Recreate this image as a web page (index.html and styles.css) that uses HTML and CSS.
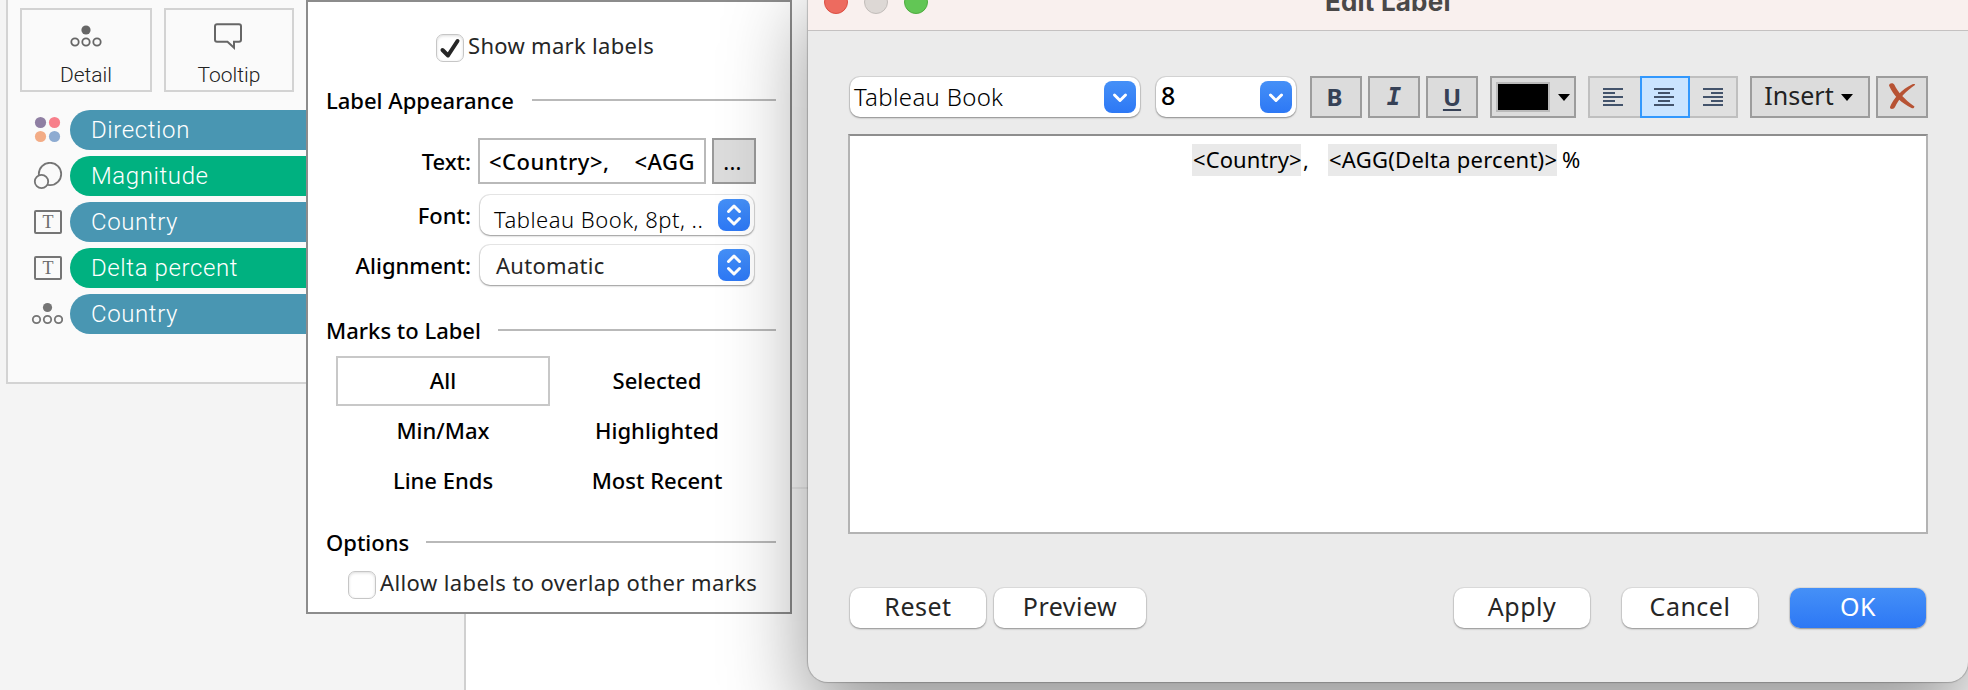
FILE: index.html
```html
<!DOCTYPE html>
<html lang="en">
<head>
<meta charset="utf-8">
<title>Edit Label</title>
<link rel="stylesheet" href="styles.css">
</head>
<body>
<div class="workspace">
  <aside class="side">
    <section class="marks-card">
      <div class="mark-buttons">
        <div class="mark-button detail">
          <svg width="32" height="28" viewBox="0 0 32 28"><circle cx="16" cy="7" r="4.6" fill="#666"/><g fill="none" stroke="#666" stroke-width="1.8"><circle cx="5" cy="19" r="3.7"/><circle cx="16" cy="19" r="3.7"/><circle cx="27" cy="19" r="3.7"/></g></svg>
          <span>Detail</span>
        </div>
        <div class="mark-button tooltip">
          <svg width="32" height="28" viewBox="0 0 32 28"><path d="M4 1.2h22a2 2 0 0 1 2 2v13.600a2 2 0 0 1-2 2h-5v6l-6.500-6H4a2 2 0 0 1-2-2V3.200a2 2 0 0 1 2-2z" fill="none" stroke="#666" stroke-width="2"/></svg>
          <span>Tooltip</span>
        </div>
      </div>
      <ul class="pills">
        <li><svg width="32" height="28" viewBox="0 0 32 28"><circle cx="9.500" cy="6.500" r="5.600" fill="#8f7fa3"/><circle cx="23.500" cy="6.500" r="5.600" fill="#f77f8b"/><circle cx="9.500" cy="20.500" r="5.600" fill="#f3ac86"/><circle cx="23.500" cy="20.500" r="5.600" fill="#8dabd1"/></svg><span class="pill blue">Direction</span></li>
        <li><svg width="32" height="28" viewBox="0 0 32 28"><g fill="#fafafa" stroke="#757575" stroke-width="1.800"><circle cx="19" cy="12" r="11.200"/><circle cx="10.500" cy="19.500" r="6.700"/></g></svg><span class="pill green">Magnitude</span></li>
        <li><svg width="32" height="28" viewBox="0 0 32 28"><rect x="4" y="3" width="26" height="22" rx="1" fill="none" stroke="#757575" stroke-width="2"/><text class="t-glyph" x="17" y="20" text-anchor="middle">T</text></svg><span class="pill blue">Country</span></li>
        <li><svg width="32" height="28" viewBox="0 0 32 28"><rect x="4" y="3" width="26" height="22" rx="1" fill="none" stroke="#757575" stroke-width="2"/><text class="t-glyph" x="17" y="20" text-anchor="middle">T</text></svg><span class="pill green">Delta percent</span></li>
        <li><svg width="32" height="28" viewBox="0 0 32 28"><circle cx="16.500" cy="7.500" r="4.600" fill="#757575"/><g fill="none" stroke="#757575" stroke-width="1.800"><circle cx="5.500" cy="19.500" r="3.700"/><circle cx="16.500" cy="19.500" r="3.700"/><circle cx="27.500" cy="19.500" r="3.700"/></g></svg><span class="pill blue">Country</span></li>
      </ul>
    </section>
  </aside>
  <main class="canvas"></main>
</div>

<section class="popup">
  <label class="check-row show-labels"><span class="check"><svg width="28" height="28" viewBox="0 0 28 28"><path d="M6.500 16l5.500 5.500L21.500 7" fill="none" stroke="#262626" stroke-width="4" stroke-linecap="round" stroke-linejoin="round"/></svg></span><span>Show mark labels</span></label>
  <h2 class="heading appearance"><span>Label Appearance</span></h2>
  <div class="form">
    <span class="form-label">Text:</span>
    <div class="text-row"><div class="text-field"><span>&lt;Country&gt;,&nbsp;&nbsp;&nbsp; &lt;AGG</span></div><div class="more">...</div></div>
    <span class="form-label">Font:</span>
    <div class="select font-select"><span>Tableau Book, 8pt, ..</span><svg class="knob" width="32" height="32" viewBox="0 0 32 32"><path d="M10.500 12.500l5.500-5.500 5.500 5.500M10.500 19.500l5.500 5.500 5.500-5.500"/></svg></div>
    <span class="form-label">Alignment:</span>
    <div class="select"><span>Automatic</span><svg class="knob" width="32" height="32" viewBox="0 0 32 32"><path d="M10.500 12.500l5.500-5.500 5.500 5.500M10.500 19.500l5.500 5.500 5.500-5.500"/></svg></div>
  </div>
  <h2 class="heading marks"><span>Marks to Label</span></h2>
  <div class="choices">
    <div class="choice selected">All</div><div class="choice">Selected</div>
    <div class="choice">Min/Max</div><div class="choice">Highlighted</div>
    <div class="choice">Line Ends</div><div class="choice">Most Recent</div>
  </div>
  <h2 class="heading options"><span>Options</span></h2>
  <label class="check-row overlap"><span class="check"></span><span>Allow labels to overlap other marks</span></label>
</section>

<section class="dialog">
  <header class="titlebar"><i class="light red"></i><i class="light gray"></i><i class="light lime"></i><h1>Edit Label</h1></header>
  <div class="dialog-body">
    <div class="toolbar">
      <div class="combo family"><span>Tableau Book</span><svg class="knob" width="32" height="32" viewBox="0 0 32 32"><path d="M10.500 14l5.500 5.500 5.500-5.500"/></svg></div>
      <div class="combo size"><span>8</span><svg class="knob" width="32" height="32" viewBox="0 0 32 32"><path d="M10.500 14l5.500 5.500 5.500-5.500"/></svg></div>
      <div class="tools">
        <div class="tool bold">B</div>
        <div class="tool italic">I</div>
        <div class="tool under">U</div>
      </div>
      <div class="tool color"><span class="swatch"></span><i class="arrow"></i></div>
      <div class="align-group">
        <div class="align"><svg width="20" height="20" viewBox="0 0 20 20"><path d="M0 2h20M0 6h12M0 10h20M0 14h12M0 18h20"/></svg></div>
        <div class="align active"><svg width="20" height="20" viewBox="0 0 20 20"><path d="M0 2h20M4 6h12M0 10h20M4 14h12M0 18h20"/></svg></div>
        <div class="align"><svg width="20" height="20" viewBox="0 0 20 20"><path d="M0 2h20M8 6h12M0 10h20M8 14h12M0 18h20"/></svg></div>
      </div>
      <div class="tool insert"><span>Insert</span><i class="arrow"></i></div>
      <div class="tool clear"><svg width="28" height="28" viewBox="0 0 28 28"><path d="M1 3.500C1.500.5 5.500.5 6.500 3c3 6.500 9.500 14 20 21.500-.5 2-2 2-3 1.500C13.500 21 5.500 14 1 3.500z"/><path d="M27 3C18.500 8.500 10.500 17 7 25c-1 2.500-5.500 2.500-5 0C5 17 14 7 24 2.500c2-.8 3.500-.2 3 .5z"/></svg></div>
    </div>
    <div class="editor"><span class="token">&lt;Country&gt;</span><span class="comma">,</span><span class="token long">&lt;AGG(Delta percent)&gt;</span><span class="percent">%</span></div>
    <footer class="actions">
      <button class="btn">Reset</button>
      <button class="btn preview">Preview</button>
      <button class="btn apply">Apply</button>
      <button class="btn cancel">Cancel</button>
      <button class="btn primary">OK</button>
    </footer>
  </div>
</section>
</body>
</html>
```

FILE: styles.css
```css
* { box-sizing: border-box; }

body {
  margin: 0;
  width: 1968px;
  height: 690px;
  overflow: hidden;
  position: relative;
  background: #fff;
  font-family: "Noto Sans", sans-serif;
  font-size: 22px;
  color: #000;
}

.workspace { display: flex; height: 690px; }
.side {
  width: 466px;
  padding-left: 6px;
  background: #f4f4f4;
  border-right: 2px solid #d0d0d0;
}
.marks-card {
  width: 400px;
  height: 384px;
  padding: 8px 0 0 12px;
  background: #fafafa;
  border: 2px solid #d3d3d3;
  border-top: 0;
  font-family: Roboto, sans-serif;
  font-weight: 300;
}
.canvas { flex: 1; height: 489px; border-bottom: 2px solid #f0f0f0; }

.mark-buttons { display: flex; gap: 12px; }
.mark-button {
  display: flex;
  flex-direction: column;
  align-items: center;
  height: 84px;
  padding-top: 13px;
  border: 2px solid #d3d3d3;
  font-size: 21px;
  font-weight: 350;
  line-height: 26px;
  color: #222;
}
.mark-button span { margin-top: 11px; }
.detail { width: 132px; }
.tooltip { width: 130px; }

.pills {
  display: flex;
  flex-direction: column;
  gap: 6px;
  list-style: none;
  margin: 18px 0 0;
  padding: 0 0 0 11px;
}
.pills li { display: flex; align-items: center; gap: 7px; height: 40px; }
.pill {
  flex: 1;
  height: 40px;
  padding-left: 21px;
  border-radius: 20px 0 0 20px;
  color: #fff;
  font-size: 24px;
  font-weight: 350;
  line-height: 41px;
  letter-spacing: 0.6px;
}
.blue { background: #4996b2; }
.green { background: #00b180; }
.t-glyph { font: 400 18px "Liberation Serif", serif; fill: #6b6b6b; }

/* Label options popup */
.popup {
  position: absolute;
  left: 306px;
  top: 0;
  width: 486px;
  height: 614px;
  padding-top: 32px;
  background: #fff;
  border: 2px solid #8c8c8c;
  letter-spacing: 0.3px;
  line-height: 30px;
}
.check-row { display: flex; gap: 4px; height: 28px; color: #262626; }
.check-row > span:last-child { line-height: 23px; }
.check {
  width: 28px;
  height: 28px;
  border: 1px solid #c6c6c6;
  border-radius: 7px;
  background: #fff;
  box-shadow: inset 0 1px 3px rgba(0, 0, 0, 0.14);
}
.check svg { display: block; margin: -1px; }
.show-labels { margin-left: 128px; }
.overlap { margin: 14px 0 0 40px; letter-spacing: 0.4px; }

.heading {
  display: flex;
  align-items: center;
  height: 30px;
  margin: 0 14px 0 18px;
  font-size: 22px;
  font-weight: 500;
  letter-spacing: 0;
}
.heading::after { content: ""; flex: 1; height: 2px; background: #b9b9b9; }
.appearance { margin-top: 23px; }
.appearance span { width: 206px; }
.marks { margin-top: 30px; }
.marks span { width: 172px; }
.options { margin-top: 21px; }
.options span { width: 100px; }

.form {
  display: grid;
  grid-template-columns: 163px 278px;
  grid-template-rows: 46px 41px 40px;
  row-gap: 10px;
  column-gap: 7px;
  margin-top: 23px;
  align-items: end;
}
.form-label { text-align: right; font-weight: 500; letter-spacing: 0; line-height: 40px; }
.form-label:first-child { line-height: 46px; }
.text-row { display: flex; gap: 6px; }
.text-field {
  width: 228px;
  height: 46px;
  padding: 0 5px 0 9px;
  border: 2px solid #b9b9b9;
  font-weight: 500;
  letter-spacing: 0.5px;
  line-height: 43px;
}
.text-field span { display: block; overflow: hidden; white-space: nowrap; }
.more {
  width: 44px;
  height: 46px;
  padding-right: 3px;
  border: 2px solid #999;
  background: #dcdcdc;
  text-align: center;
  line-height: 42px;
}
.select, .combo {
  display: flex;
  align-items: center;
  justify-content: space-between;
  height: 40px;
  padding-right: 4px;
  border-radius: 10px;
  background: #fff;
  box-shadow: 0 0 0 1px rgba(0, 0, 0, 0.09), 0 1px 2px rgba(0, 0, 0, 0.35);
}
.select { width: 274px; margin-left: 2px; padding-left: 16px; color: #262626; }
.font-select { color: #000; padding-left: 14px; font-weight: 350; letter-spacing: 0.5px; white-space: nowrap; }
.font-select span { padding-top: 8px; }
.knob {
  flex: none;
  border-radius: 8px;
  background: linear-gradient(#4590f7, #2d78f5);
  fill: none;
  stroke: #fff;
  stroke-width: 3;
  stroke-linecap: round;
  stroke-linejoin: round;
}

.choices {
  display: grid;
  grid-template-columns: 214px 214px;
  grid-auto-rows: 50px;
  margin: 11px 0 0 28px;
  text-align: center;
  font-weight: 500;
  letter-spacing: 0;
  line-height: 48px;
}
.selected { border: 2px solid #c8c8c8; line-height: 44px; }

/* Edit Label window */
.dialog {
  position: absolute;
  left: 808px;
  top: -26px;
  width: 1160px;
  height: 708px;
  border-radius: 20px;
  background: #ebebeb;
  box-shadow: 0 0 1px 1px rgba(0, 0, 0, 0.2), 0 36px 84px rgba(0, 0, 0, 0.42);
}
.titlebar {
  display: flex;
  height: 57px;
  padding: 16px 0 0 16px;
  border-radius: 20px 20px 0 0;
  background: #f9f0ee;
  border-bottom: 1px solid #c4c1c1;
}
.light { width: 24px; height: 24px; margin-right: 16px; border-radius: 50%; border: 1px solid; }
.red { background: #ed6b5f; border-color: #dc4e42; }
.gray { background: #ddd8d5; border-color: #c2bdba; }
.lime { background: #62c655; border-color: #4eac3f; }
.titlebar h1 {
  margin: 0 0 0 381px;
  font: 700 26px/24px Inter, sans-serif;
  letter-spacing: 0.2px;
  color: #4a4848;
}
.dialog-body { padding: 45px 40px 0; }
.toolbar { display: flex; height: 42px; align-items: center; }
.combo.family { width: 290px; margin-left: 2px; padding-left: 4px; font-size: 24px; font-weight: 350; }
.family span { margin-top: -2px; letter-spacing: 0.3px; }
.combo.size { width: 140px; margin-left: 16px; padding-left: 5px; font-size: 25px; font-weight: 500; }
.combo.size span { margin-top: -5px; }
.tools { display: flex; gap: 6px; margin-left: 14px; }
.tool {
  display: flex;
  align-items: center;
  justify-content: center;
  width: 52px;
  height: 42px;
  border: 2px solid #9c9c9c;
  background: #dcdcdc;
  color: #364156;
}
.bold, .under { padding: 0 3px 2px 0; }
.bold { font-weight: 700; font-size: 24px; }
.italic { font: italic 700 24px "DejaVu Sans Mono", monospace; }
.under { padding-right: 0; font-weight: 700; font-size: 24px; text-decoration: underline; text-decoration-thickness: 2px; text-underline-offset: 3px; }
.color { width: 86px; margin-left: 12px; gap: 8px; }
.swatch { width: 54px; height: 30px; border: 2px solid #bababa; background: #000; }
.arrow { border: 6.500px solid transparent; border-top: 7px solid #000; border-bottom: 0; }
.align-group { display: flex; width: 150px; height: 42px; margin-left: 12px; border: 2px solid #bfbfbf; background: #e0e0e0; }
.align { flex: 1; display: flex; align-items: center; justify-content: center; padding-right: 4px; }
.align:last-child { padding-right: 0; }
.align svg { stroke: #43536b; stroke-width: 2; }
.align.active { flex: none; width: 50px; margin: -2px 0; padding: 0 2px 0 0; border: 2px solid #3298fd; background: #cae4ff; }
.insert { width: 120px; margin-left: 12px; gap: 7px; padding-right: 3px; font-size: 25px; color: #222; }
.insert span { margin-top: -4px; }
.clear { margin-left: 6px; }
.clear svg { fill: #b75334; margin-top: -2px; }

.editor {
  display: flex;
  height: 400px;
  margin-top: 16px;
  padding: 8px 0 0 342px;
  border: 2px solid #b3b3b3;
  border-top-color: #8e8e8e;
  background: #fff;
  line-height: 31px;
  white-space: nowrap;
}
.token { width: 109px; height: 32px; padding-left: 1px; background: #e9e9e9; letter-spacing: 0.1px; }
.token.long { width: 229px; letter-spacing: 0.25px; }
.comma { width: 27px; padding-left: 2px; }
.percent { padding-left: 5px; }

.actions { display: flex; margin: 54px 0 0 2px; }
.btn {
  width: 136px;
  height: 40px;
  padding: 0 0 4px;
  border: 0;
  border-radius: 10px;
  background: #fff;
  box-shadow: 0 0 0 1px rgba(0, 0, 0, 0.06), 0 1px 2px rgba(0, 0, 0, 0.35);
  font: 400 25px "Noto Sans", sans-serif;
  letter-spacing: 0.5px;
  line-height: 35px;
  color: #262626;
}
.preview { width: 152px; margin-left: 8px; }
.apply { margin-left: auto; }
.cancel { margin: 0 32px; }
.primary { margin-right: 2px; background: linear-gradient(#4590f7, #2d78f5); color: #fff; }
```
